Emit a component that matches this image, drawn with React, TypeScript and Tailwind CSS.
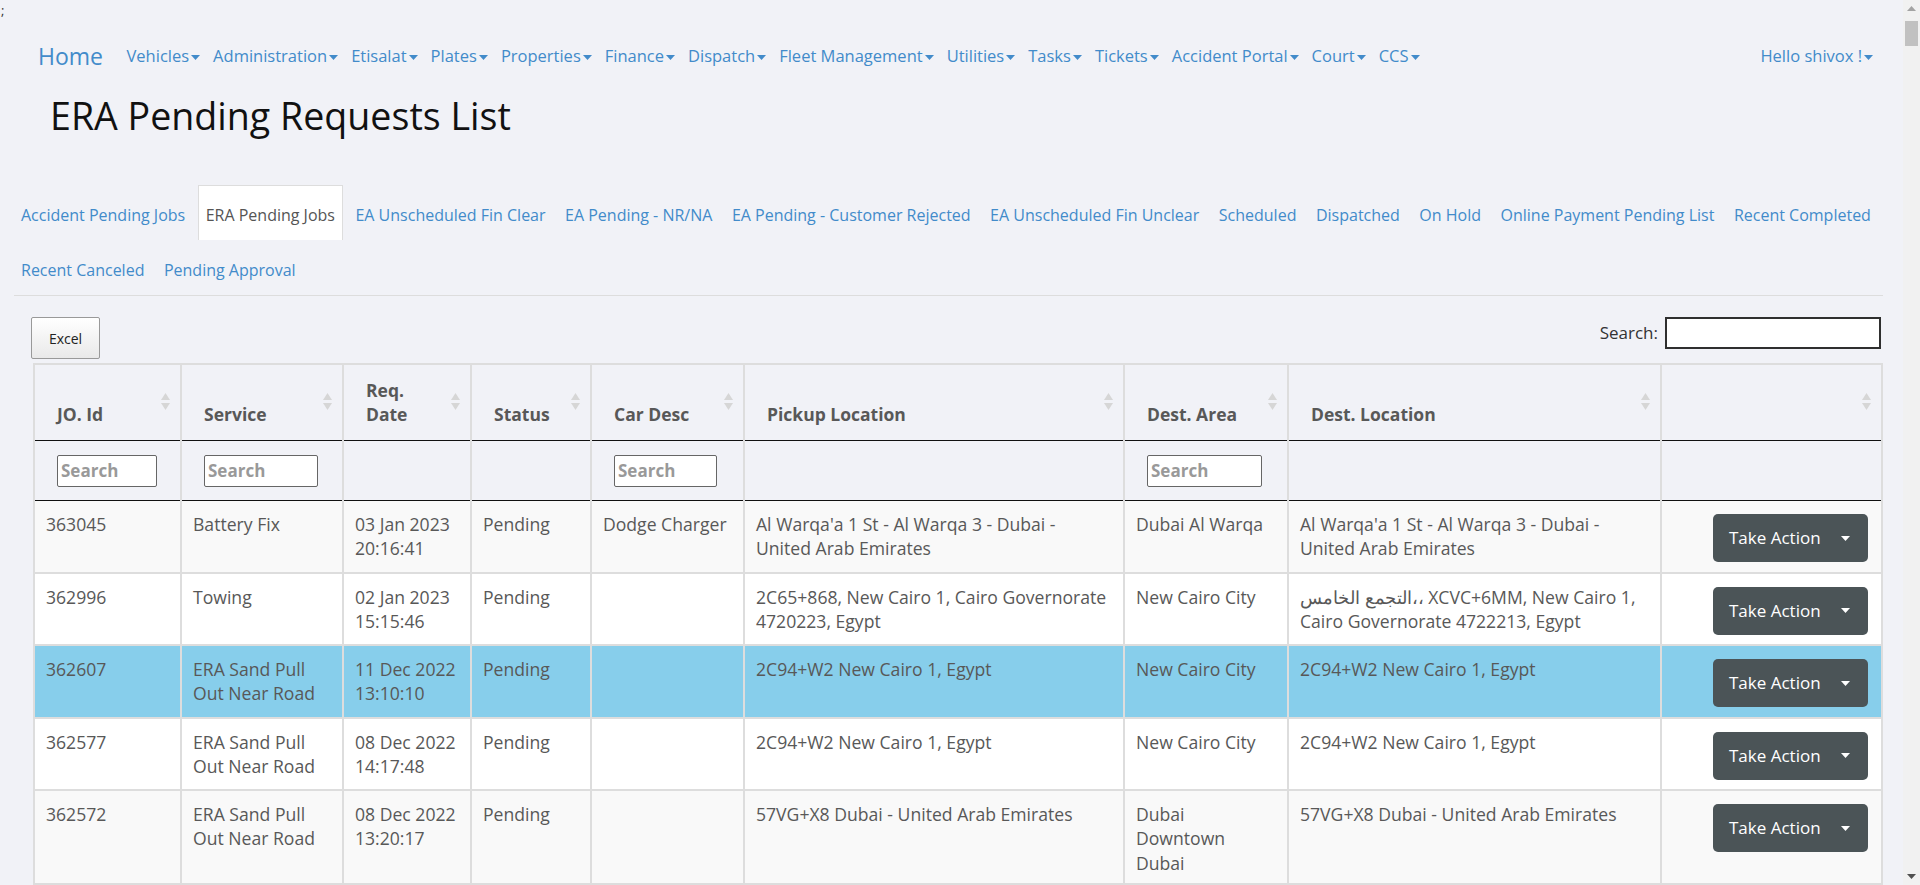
import React from "react";

const navItems = [
  "Vehicles",
  "Administration",
  "Etisalat",
  "Plates",
  "Properties",
  "Finance",
  "Dispatch",
  "Fleet Management",
  "Utilities",
  "Tasks",
  "Tickets",
  "Accident Portal",
  "Court",
  "CCS",
];

const tabs = [
  "Accident Pending Jobs",
  "ERA Pending Jobs",
  "EA Unscheduled Fin Clear",
  "EA Pending - NR/NA",
  "EA Pending - Customer Rejected",
  "EA Unscheduled Fin Unclear",
  "Scheduled",
  "Dispatched",
  "On Hold",
  "Online Payment Pending List",
  "Recent Completed",
  "Recent Canceled",
  "Pending Approval",
];

const columns = [
  { label: "JO. Id", width: "w-[147px]", search: "w-[100px]" },
  { label: "Service", width: "w-[162px]", search: "w-[114px]" },
  { label: "Req. Date", width: "w-[128px]", search: "" },
  { label: "Status", width: "w-[120px]", search: "" },
  { label: "Car Desc", width: "w-[153px]", search: "w-[103px]" },
  { label: "Pickup Location", width: "w-[380px]", search: "" },
  { label: "Dest. Area", width: "w-[164px]", search: "w-[115px]" },
  { label: "Dest. Location", width: "w-[373px]", search: "" },
  { label: "", width: "w-[221px]", search: "" },
];

type Job = {
  id: string;
  service: string;
  date: string;
  time: string;
  status: string;
  car: string;
  pickup: string;
  destArea: string;
  destLocation: string;
  selected?: boolean;
};

const jobs: Job[] = [
  {
    id: "363045",
    service: "Battery Fix",
    date: "03 Jan 2023",
    time: "20:16:41",
    status: "Pending",
    car: "Dodge Charger",
    pickup: "Al Warqa'a 1 St - Al Warqa 3 - Dubai - United Arab Emirates",
    destArea: "Dubai Al Warqa",
    destLocation: "Al Warqa'a 1 St - Al Warqa 3 - Dubai - United Arab Emirates",
  },
  {
    id: "362996",
    service: "Towing",
    date: "02 Jan 2023",
    time: "15:15:46",
    status: "Pending",
    car: "",
    pickup: "2C65+868, New Cairo 1, Cairo Governorate 4720223, Egypt",
    destArea: "New Cairo City",
    destLocation:
      "التجمع الخامس،، XCVC+6MM, New Cairo 1, Cairo Governorate 4722213, Egypt",
  },
  {
    id: "362607",
    service: "ERA Sand Pull Out Near Road",
    date: "11 Dec 2022",
    time: "13:10:10",
    status: "Pending",
    car: "",
    pickup: "2C94+W2 New Cairo 1, Egypt",
    destArea: "New Cairo City",
    destLocation: "2C94+W2 New Cairo 1, Egypt",
    selected: true,
  },
  {
    id: "362577",
    service: "ERA Sand Pull Out Near Road",
    date: "08 Dec 2022",
    time: "14:17:48",
    status: "Pending",
    car: "",
    pickup: "2C94+W2 New Cairo 1, Egypt",
    destArea: "New Cairo City",
    destLocation: "2C94+W2 New Cairo 1, Egypt",
  },
  {
    id: "362572",
    service: "ERA Sand Pull Out Near Road",
    date: "08 Dec 2022",
    time: "13:20:17",
    status: "Pending",
    car: "",
    pickup: "57VG+X8 Dubai - United Arab Emirates",
    destArea: "Dubai Downtown Dubai",
    destLocation: "57VG+X8 Dubai - United Arab Emirates",
  },
];

function Caret({ className = "" }: { className?: string }) {
  return (
    <svg width="9" height="5" viewBox="0 0 9 5" className={className}>
      <path d="M0 0 L9 0 L4.5 5 Z" fill="currentColor" />
    </svg>
  );
}

function SortIcon() {
  return (
    <svg
      width="9"
      height="19"
      viewBox="0 0 9 19"
      className="absolute right-[10px] top-[27px]"
    >
      <path d="M4.5 1 L9 8 L0 8 Z" fill="#d6d6d6" />
      <path d="M0 11 L9 11 L4.5 18 Z" fill="#d6d6d6" />
    </svg>
  );
}

function Scrollbar() {
  return (
    <div className="w-[17px] shrink-0 bg-[#f1f1f1] flex flex-col">
      <div className="h-[17px] flex items-center justify-center">
        <svg width="9" height="5" viewBox="0 0 9 5">
          <path d="M4.5 0 L9 5 L0 5 Z" fill="#a3a3a3" />
        </svg>
      </div>
      <div className="mx-[2px] mt-[4px] h-[25px] bg-[#c1c1c1]" />
      <div className="flex-1" />
      <div className="h-[17px] flex items-center justify-center">
        <svg width="9" height="5" viewBox="0 0 9 5">
          <path d="M0 0 L9 0 L4.5 5 Z" fill="#505050" />
        </svg>
      </div>
    </div>
  );
}

export default function App() {
  return (
    <div className="flex h-screen overflow-hidden bg-[#f1f2f7] font-['Open_Sans',sans-serif]">
      <div className="flex-1 min-w-0">
        <div className="h-[20px] pl-[1px] text-[13px] leading-[20px] text-[#333]">;</div>

        {/* top nav */}
        <div className="h-[72px] flex items-center pl-[38px] pr-[30px] text-[16.5px] text-[#428bca]">
          <span className="text-[23px] mr-[17px]">Home</span>
          {navItems.map((item) => (
            <span key={item} className="flex items-center px-[6.5px]">
              {item}
              <Caret className="ml-[2px] mt-[2px]" />
            </span>
          ))}
          <span className="ml-auto flex items-center">
            Hello shivox !
            <Caret className="ml-[2px] mt-[2px]" />
          </span>
        </div>

        <h1 className="mt-[4px] pl-[50px] text-[37.6px] leading-[40px] text-[#111]">
          ERA Pending Requests List
        </h1>

        {/* tabs */}
        <div className="mt-[49px] ml-[14px] mr-[20px] flex flex-wrap gap-x-[5.5px] border-b border-[#ddd] text-[16px] leading-[25px]">
          {tabs.map((tab) =>
            tab === "ERA Pending Jobs" ? (
              <div
                key={tab}
                className="px-[7px] pt-[17px] pb-[12px] bg-white border border-b-0 border-[#ddd] text-[#555]"
              >
                {tab}
              </div>
            ) : (
              <div key={tab} className="px-[7px] pt-[18px] pb-[12px] text-[#428bca]">
                {tab}
              </div>
            )
          )}
        </div>

        {/* datatable */}
        <div className="mt-[21px] ml-[31px] mr-[22px]">
          <div className="flex items-start justify-between h-[42px]">
            <button className="h-[42px] w-[69px] rounded-[2px] border border-[#999] bg-gradient-to-b from-white to-[#e9e9e9] text-[14px] text-[#222]">
              Excel
            </button>
            <div className="flex items-center text-[17px] text-[#333]">
              <span className="mr-[7px]">Search:</span>
              <input className="h-[32px] w-[216px] bg-white border-2 border-[#2f2f2f]" />
            </div>
          </div>

          <table className="mt-[4px] ml-[2px] w-[1848px] table-fixed border-collapse text-[17.6px] text-[#585858]">
            <colgroup>
              {columns.map((c, i) => (
                <col key={i} className={c.width} />
              ))}
            </colgroup>
            <thead>
              <tr>
                {columns.map((c, i) => (
                  <th
                    key={i}
                    className="relative align-bottom text-left font-bold text-[17.5px] leading-[24px] pl-[22px] pr-[26px] pt-[13px] pb-[14px] border-2 border-[#ddd] border-b border-b-[#111]"
                  >
                    {c.label === "Req. Date" ? (
                      <>
                        Req.
                        <br />
                        Date
                      </>
                    ) : (
                      c.label
                    )}
                    <SortIcon />
                  </th>
                ))}
              </tr>
              <tr>
                {columns.map((c, i) => (
                  <td
                    key={i}
                    className="h-[60px] px-[22px] border-2 border-t-0 border-[#ddd] border-b border-b-[#111]"
                  >
                    {c.search && (
                      <input
                        placeholder="Search"
                        className={`${c.search} h-[32px] rounded-[2px] border border-[#666] bg-white px-[3px] font-bold text-[17px] placeholder:text-[#999]`}
                      />
                    )}
                  </td>
                ))}
              </tr>
            </thead>
            <tbody>
              {jobs.map((job, idx) => {
                const bg = job.selected
                  ? "bg-[#87ceeb]"
                  : idx % 2 === 0
                  ? "bg-[#f9f9f9]"
                  : "bg-white";
                const cell =
                  "align-top leading-[24.3px] pl-[11px] pr-[10px] pt-[11px] pb-[8px] border-2 border-[#ddd]" +
                  (idx === 0 ? " border-t-0" : "");
                return (
                  <tr key={job.id} className={bg}>
                    <td className={cell}>{job.id}</td>
                    <td className={cell}>{job.service}</td>
                    <td className={cell}>
                      {job.date}
                      <br />
                      {job.time}
                    </td>
                    <td className={cell}>{job.status}</td>
                    <td className={cell}>{job.car}</td>
                    <td className={cell}>{job.pickup}</td>
                    <td className={cell}>{job.destArea}</td>
                    <td className={cell}>{job.destLocation}</td>
                    <td
                      className={
                        "align-top text-right pr-[13px] pt-[13px] pb-[9.5px] border-2 border-[#ddd]" +
                        (idx === 0 ? " border-t-0" : "")
                      }
                    >
                      <button className="inline-flex items-center justify-between h-[48px] w-[155px] rounded-[5px] bg-[#4b5457] pl-[16px] pr-[18px] text-[17px] text-white">
                        Take Action
                        <Caret />
                      </button>
                    </td>
                  </tr>
                );
              })}
            </tbody>
          </table>
        </div>
      </div>
      <Scrollbar />
    </div>
  );
}
